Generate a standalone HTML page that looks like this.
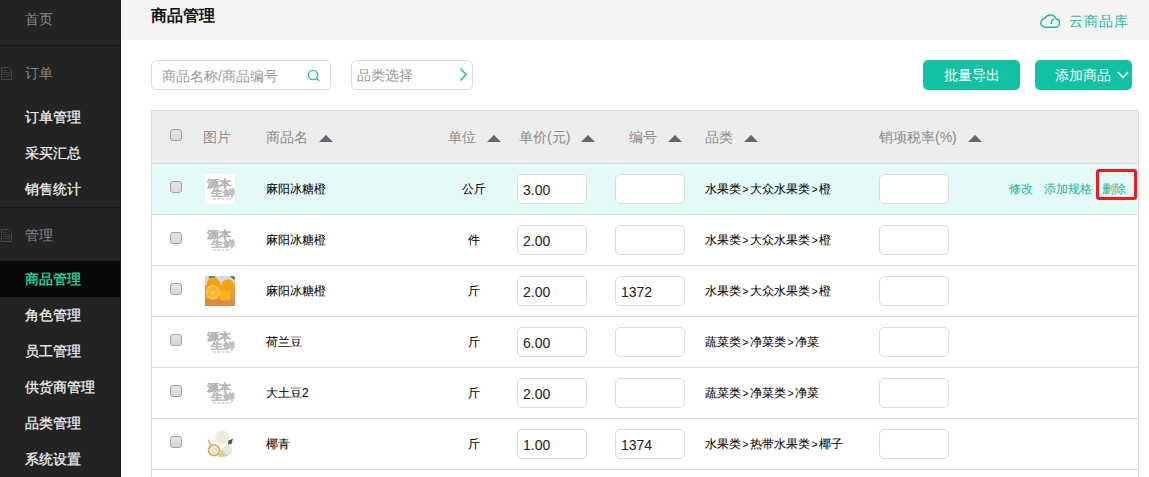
<!DOCTYPE html>
<html><head><meta charset="utf-8">
<style>
*{margin:0;padding:0;box-sizing:border-box}
html,body{width:1149px;height:477px;overflow:hidden;background:#fff;font-family:"Liberation Sans",sans-serif}
.a{position:absolute;white-space:nowrap}
#side{position:absolute;left:0;top:0;width:121px;height:477px;background:#232323;border-right:1px solid #1a1a1a}
.sep{position:absolute;left:0;width:120px;height:1px;background:#161616}
.si{position:absolute;left:25px;height:36px;line-height:36px;font-size:14px;color:#f4f4f4;-webkit-text-stroke:0.25px currentColor}
.sh{color:#888;-webkit-text-stroke:0}
.act{left:0;width:120px;padding-left:25px;background:#090909;color:#27e3b0}
.doc{position:absolute;left:1px;width:11px;height:13px}
#hdr{position:absolute;left:122px;top:0;width:1027px;height:40px;background:#f4f4f4}
.t{font-size:14px}
.box{position:absolute;border:1px solid #dcdcdc;border-radius:5px;background:#fff}
.btn{position:absolute;top:60px;height:30px;background:#12c1a1;border-radius:5px;color:#fff;font-size:14px;line-height:30px}
#tbl{position:absolute;left:151px;top:110px;width:988px;height:380px;border:1px solid #dcdcdc}
.th{position:absolute;left:0;top:0;width:986px;height:53px;background:#ededed;border-bottom:1px solid #dcdcdc}
.row{position:absolute;left:0;width:986px;height:51px;border-bottom:1px solid #dcdcdc}
.hl{background:#e4faf8}
.hx{position:absolute;top:0;height:52px;line-height:52px;font-size:14px;color:#8a8a8a}
.tri{display:inline-block;width:0;height:0;border-left:7px solid transparent;border-right:7px solid transparent;border-bottom:7px solid #5f6675;vertical-align:middle;margin-left:11px;position:relative;top:0px}
.cb{position:absolute;left:18px;width:12px;height:12px;border:1px solid #a2a2a2;border-radius:3px;background:linear-gradient(#e4e4e4,#d8d8d8)}
.c{position:absolute;top:0;height:50px;line-height:50px;font-size:12px;color:#000;-webkit-text-stroke:0.06px currentColor}
.inp{position:absolute;top:10px;width:70px;height:30px;border:1px solid #dcdcdc;border-radius:5px;background:#fff;font-size:14px;line-height:30px;padding-left:5px;color:#222}
.img{position:absolute;left:53px;top:10px;width:30px;height:30px}
.lk{color:#1bb394;-webkit-text-stroke:0}
.gt{font-size:10px;margin:0 1.6px}
</style></head><body>
<div id="side">
  <div class="si sh" style="top:1px">首页</div>
  <div class="sep" style="top:45px"></div>
  <svg class="doc" style="top:67px" viewBox="0 0 11 13" width="11" height="13"><path d="M0.5 0.5H7.5L10.5 3.5V12.5H0.5Z" fill="none" stroke="#454545"/><path d="M2 3.5H5.5M2 5.5H9M2 7.5H9M2 9.5H9" stroke="#3d3d3d"/></svg>
  <div class="si sh" style="top:55px">订单</div>
  <div class="si" style="top:99px">订单管理</div>
  <div class="si" style="top:135px">采买汇总</div>
  <div class="si" style="top:171px">销售统计</div>
  <div class="sep" style="top:207px"></div>
  <svg class="doc" style="top:229px" viewBox="0 0 11 13" width="11" height="13"><path d="M0.5 0.5H7.5L10.5 3.5V12.5H0.5Z" fill="none" stroke="#454545"/><path d="M2 3.5H5.5M2 5.5H9M2 7.5H9M2 9.5H9" stroke="#3d3d3d"/></svg>
  <div class="si sh" style="top:217px">管理</div>
  <div class="si act" style="top:261px">商品管理</div>
  <div class="si" style="top:297px">角色管理</div>
  <div class="si" style="top:333px">员工管理</div>
  <div class="si" style="top:369px">供货商管理</div>
  <div class="si" style="top:405px">品类管理</div>
  <div class="si" style="top:441px">系统设置</div>
</div>
<div id="hdr"></div>
<div class="a" style="left:151px;top:4px;height:24px;line-height:24px;font-size:16px;font-weight:bold;color:#111">商品管理</div>
<svg class="a" style="left:1040px;top:13.5px" width="22" height="16" viewBox="0 0 22 16"><path d="M5.5 13.3H15.5A4.3 4.3 0 0 0 16 4.8 A5.9 5.9 0 0 0 5.2 4.3A4.5 4.5 0 0 0 5.5 13.3Z" fill="none" stroke="#1ab99a" stroke-width="1.4"/><path d="M11.3 9.8A4.3 4.3 0 0 1 14.2 5.2" fill="none" stroke="#1ab99a" stroke-width="1.4"/></svg>
<div class="a t" style="left:1069px;top:10px;height:22px;line-height:22px;color:#1ab99a;letter-spacing:1px">云商品库</div>

<div class="box" style="left:151px;top:60px;width:180px;height:30px"></div>
<div class="a t" style="left:162px;top:64px;height:24px;line-height:24px;color:#999">商品名称/商品编号</div>
<svg class="a" style="left:307px;top:69px" width="14" height="14" viewBox="0 0 14 14"><circle cx="6" cy="6" r="4.6" fill="none" stroke="#1fc6a5" stroke-width="1.4"/><path d="M9.3 9.3l3 2.6" stroke="#1fc6a5" stroke-width="1.4"/></svg>
<div class="box" style="left:351px;top:60px;width:122px;height:30px"></div>
<div class="a t" style="left:357px;top:63px;height:24px;line-height:24px;color:#999">品类选择</div>
<svg class="a" style="left:458px;top:67px" width="11" height="15" viewBox="0 0 11 15"><path d="M2.5 1.5l5.5 6-5.5 6" fill="none" stroke="#1fc6a5" stroke-width="1.6"/></svg>

<div class="btn" style="left:923px;width:97px;text-align:center">批量导出</div>
<div class="btn" style="left:1035px;width:97px;padding-left:20px">添加商品</div>
<svg class="a" style="left:1117px;top:70px" width="12" height="10" viewBox="0 0 12 10"><path d="M1 2l5 5.5 5-5.5" fill="none" stroke="#fff" stroke-width="1.6"/></svg>

<div id="tbl">
  <div class="th">
    <div class="cb" style="top:18px"></div>
    <div class="hx" style="left:51px">图片</div>
    <div class="hx" style="left:114px">商品名<span class="tri"></span></div>
    <div class="hx" style="left:296px">单位<span class="tri"></span></div>
    <div class="hx" style="left:367px">单价(元)<span class="tri"></span></div>
    <div class="hx" style="left:477px">编号<span class="tri"></span></div>
    <div class="hx" style="left:553px">品类<span class="tri"></span></div>
    <div class="hx" style="left:727px">销项税率(%)<span class="tri"></span></div>
  </div>
  <div class="row hl" style="top:53px"><div class="cb" style="top:17px"></div><svg class="img" viewBox="0 0 30 30"><rect width="30" height="30" fill="#fff"/><text x="1.5" y="12.6" font-size="9.6" textLength="24" lengthAdjust="spacingAndGlyphs" fill="#ababab" stroke="#b5b5b5" stroke-width="0.2" font-weight="bold">源本</text><text x="5.5" y="21.8" font-size="8.8" textLength="24" lengthAdjust="spacingAndGlyphs" fill="#b3b3b3" stroke="#bdbdbd" stroke-width="0.2" font-weight="bold">生鲜</text><path d="M8 25h18" stroke="#cfcfcf" stroke-width="1.4" stroke-dasharray="3 1.2"/></svg><div class="c" style="left:114px">麻阳冰糖橙</div><div class="c" style="left:292px;width:60px;text-align:center">公斤</div><div class="inp" style="left:365px">3.00</div><div class="inp" style="left:463px"></div><div class="c" style="left:553px">水果类<span class="gt">&gt;</span>大众水果类<span class="gt">&gt;</span>橙</div><div class="inp" style="left:727px"></div><div class="c lk" style="left:857px">修改</div><div class="c lk" style="left:892px">添加规格</div><div class="c lk" style="left:950px">删除</div><div style="position:absolute;left:944px;top:5px;width:41px;height:31px;border:3px solid #f01c1c;border-radius:3px"></div></div>
  <div class="row" style="top:104px"><div class="cb" style="top:17px"></div><svg class="img" viewBox="0 0 30 30"><rect width="30" height="30" fill="#fff"/><text x="1.5" y="12.6" font-size="9.6" textLength="24" lengthAdjust="spacingAndGlyphs" fill="#ababab" stroke="#b5b5b5" stroke-width="0.2" font-weight="bold">源本</text><text x="5.5" y="21.8" font-size="8.8" textLength="24" lengthAdjust="spacingAndGlyphs" fill="#b3b3b3" stroke="#bdbdbd" stroke-width="0.2" font-weight="bold">生鲜</text><path d="M8 25h18" stroke="#cfcfcf" stroke-width="1.4" stroke-dasharray="3 1.2"/></svg><div class="c" style="left:114px">麻阳冰糖橙</div><div class="c" style="left:292px;width:60px;text-align:center">件</div><div class="inp" style="left:365px">2.00</div><div class="inp" style="left:463px"></div><div class="c" style="left:553px">水果类<span class="gt">&gt;</span>大众水果类<span class="gt">&gt;</span>橙</div><div class="inp" style="left:727px"></div></div>
  <div class="row" style="top:155px"><div class="cb" style="top:17px"></div><svg class="img" viewBox="0 0 30 30"><rect width="30" height="30" fill="#e39a4a"/><rect width="30" height="9" fill="#dadade"/><rect y="23" width="30" height="7" fill="#d88c44"/><path d="M4 2q3-3 6 0" stroke="#4f9a3a" stroke-width="2.2" fill="none"/><path d="M26 0l4 3" stroke="#4a8a3a" stroke-width="2.5"/><circle cx="8.4" cy="8.2" r="6.6" fill="#f6a010"/><circle cx="22.7" cy="10" r="6.8" fill="#f7a20e"/><rect x="15" y="14.5" width="10.5" height="10" rx="2" fill="#fbb018"/><circle cx="8" cy="16.3" r="7.2" fill="#ffc850"/><circle cx="8" cy="16.3" r="6" fill="#ffb428"/><circle cx="8" cy="16.3" r="1.6" fill="#ffe7a0"/></svg><div class="c" style="left:114px">麻阳冰糖橙</div><div class="c" style="left:292px;width:60px;text-align:center">斤</div><div class="inp" style="left:365px">2.00</div><div class="inp" style="left:463px">1372</div><div class="c" style="left:553px">水果类<span class="gt">&gt;</span>大众水果类<span class="gt">&gt;</span>橙</div><div class="inp" style="left:727px"></div></div>
  <div class="row" style="top:206px"><div class="cb" style="top:17px"></div><svg class="img" viewBox="0 0 30 30"><rect width="30" height="30" fill="#fff"/><text x="1.5" y="12.6" font-size="9.6" textLength="24" lengthAdjust="spacingAndGlyphs" fill="#ababab" stroke="#b5b5b5" stroke-width="0.2" font-weight="bold">源本</text><text x="5.5" y="21.8" font-size="8.8" textLength="24" lengthAdjust="spacingAndGlyphs" fill="#b3b3b3" stroke="#bdbdbd" stroke-width="0.2" font-weight="bold">生鲜</text><path d="M8 25h18" stroke="#cfcfcf" stroke-width="1.4" stroke-dasharray="3 1.2"/></svg><div class="c" style="left:114px">荷兰豆</div><div class="c" style="left:292px;width:60px;text-align:center">斤</div><div class="inp" style="left:365px">6.00</div><div class="inp" style="left:463px"></div><div class="c" style="left:553px">蔬菜类<span class="gt">&gt;</span>净菜类<span class="gt">&gt;</span>净菜</div><div class="inp" style="left:727px"></div></div>
  <div class="row" style="top:257px"><div class="cb" style="top:17px"></div><svg class="img" viewBox="0 0 30 30"><rect width="30" height="30" fill="#fff"/><text x="1.5" y="12.6" font-size="9.6" textLength="24" lengthAdjust="spacingAndGlyphs" fill="#ababab" stroke="#b5b5b5" stroke-width="0.2" font-weight="bold">源本</text><text x="5.5" y="21.8" font-size="8.8" textLength="24" lengthAdjust="spacingAndGlyphs" fill="#b3b3b3" stroke="#bdbdbd" stroke-width="0.2" font-weight="bold">生鲜</text><path d="M8 25h18" stroke="#cfcfcf" stroke-width="1.4" stroke-dasharray="3 1.2"/></svg><div class="c" style="left:114px">大土豆2</div><div class="c" style="left:292px;width:60px;text-align:center">斤</div><div class="inp" style="left:365px">2.00</div><div class="inp" style="left:463px"></div><div class="c" style="left:553px">蔬菜类<span class="gt">&gt;</span>净菜类<span class="gt">&gt;</span>净菜</div><div class="inp" style="left:727px"></div></div>
  <div class="row" style="top:308px"><div class="cb" style="top:17px"></div><svg class="img" viewBox="0 0 30 30"><ellipse cx="17" cy="24.5" rx="7" ry="3.5" fill="#e3cc9a"/><circle cx="17.3" cy="8.6" r="7.2" fill="#efebe2"/><path d="M23.5 11.5l4.5-2-1.5 5.5-3.5 0.5z" fill="#2c6a2c"/><circle cx="22.7" cy="20.8" r="4.8" fill="#e9e6de"/><circle cx="9" cy="21.2" r="6.8" fill="#f6f2e9"/><circle cx="9" cy="21.2" r="5.4" fill="none" stroke="#d6a75a" stroke-width="1.5"/><circle cx="9.6" cy="21.6" r="2.2" fill="none" stroke="#dccaa6" stroke-width="1"/><path d="M3 10.5l4 7" stroke="#dcab5a" stroke-width="1.5"/></svg><div class="c" style="left:114px">椰青</div><div class="c" style="left:292px;width:60px;text-align:center">斤</div><div class="inp" style="left:365px">1.00</div><div class="inp" style="left:463px">1374</div><div class="c" style="left:553px">水果类<span class="gt">&gt;</span>热带水果类<span class="gt">&gt;</span>椰子</div><div class="inp" style="left:727px"></div></div>
  <div class="row" style="top:359px"></div>
</div>
</body></html>
